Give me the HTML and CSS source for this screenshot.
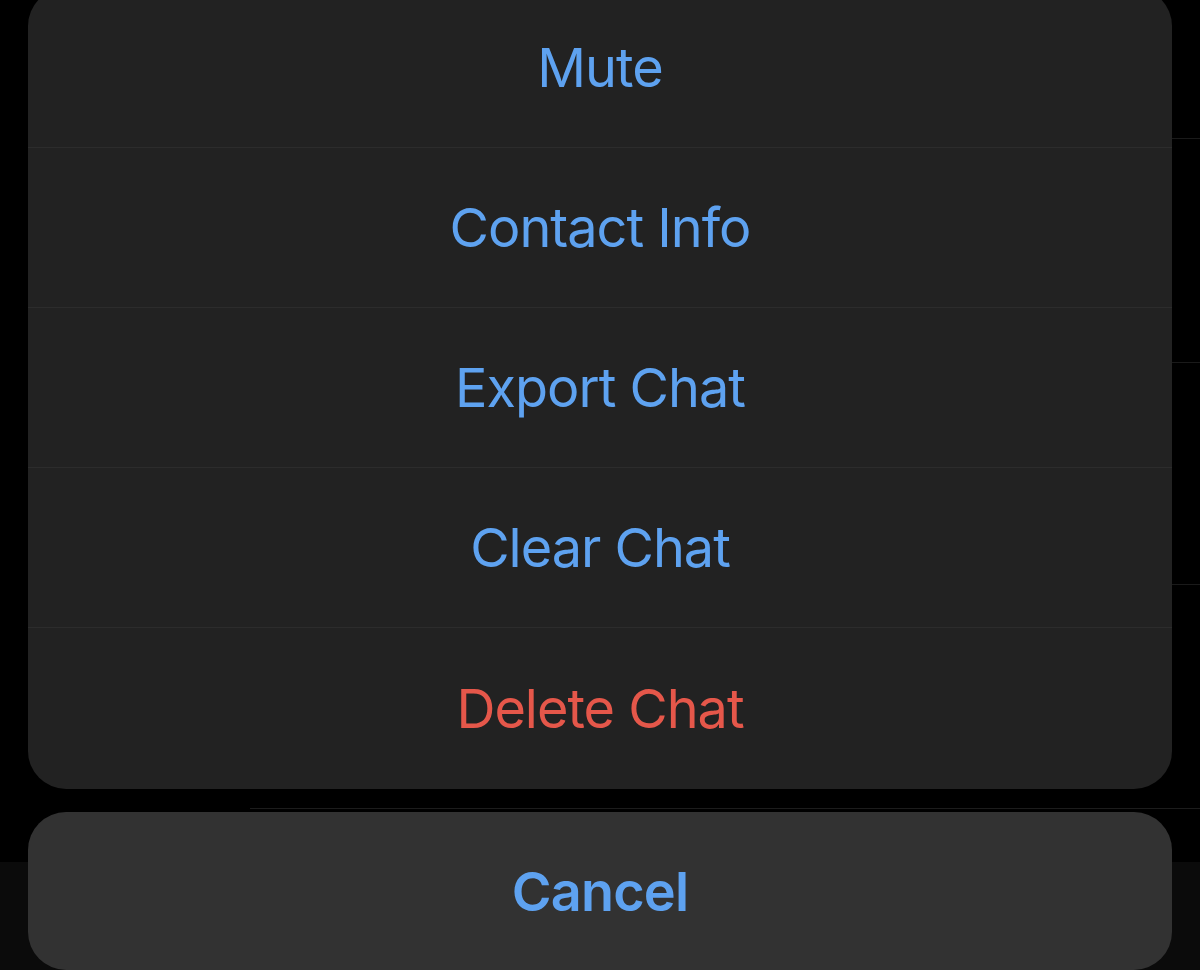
FILE: index.html
```html
<!DOCTYPE html>
<html lang="en">
<head>
<meta charset="utf-8">
<title>Chat actions</title>
<link rel="stylesheet" href="styles.css">
</head>
<body>
<div class="overlay">
  <div class="sheet">
    <div class="action first">Mute</div>
    <div class="action">Contact Info</div>
    <div class="action">Export Chat</div>
    <div class="action">Clear Chat</div>
    <div class="action danger">Delete Chat</div>
  </div>
  <div class="cancel">Cancel</div>
</div>
</body>
</html>
```
FILE: styles.css
```css
html, body {
  margin: 0;
  padding: 0;
}
body {
  width: 1200px;
  height: 970px;
  overflow: hidden;
  background-color: #000;
  background-image:
    linear-gradient(#0b0b0b, #0b0b0b),
    linear-gradient(#1c1c1c, #1c1c1c),
    linear-gradient(#1a1a1a, #1a1a1a),
    linear-gradient(#1a1a1a, #1a1a1a),
    linear-gradient(#1a1a1a, #1a1a1a);
  background-size:
    100% 108px,
    950px 1px,
    950px 1px,
    950px 1px,
    950px 1px;
  background-position:
    0 862px,
    250px 808px,
    250px 584px,
    250px 362px,
    250px 138px;
  background-repeat: no-repeat;
  font-family: Inter, "Liberation Sans", sans-serif;
}
.overlay {
  display: flex;
  flex-direction: column;
  gap: 23px;
  padding: 0 28px;
  margin-top: -12px;
}
.sheet {
  background: #222222;
  border-radius: 38px;
  overflow: hidden;
  display: flex;
  flex-direction: column;
}
.action {
  height: 160px;
  box-sizing: border-box;
  border-top: 1px solid #2c2c2c;
  display: flex;
  align-items: center;
  justify-content: center;
  font-size: 54px;
  font-weight: 400;
  color: #5ea2f0;
  letter-spacing: -1px;
}
.action.first {
  border-top: none;
  height: 159px;
}
.action.danger {
  color: #e5574a;
  height: 162px;
}
.cancel {
  height: 158px;
  background: #323232;
  border-radius: 38px;
  display: flex;
  align-items: center;
  justify-content: center;
  font-size: 54px;
  font-weight: 600;
  color: #5ea2f0;
  letter-spacing: -0.8px;
}
```
